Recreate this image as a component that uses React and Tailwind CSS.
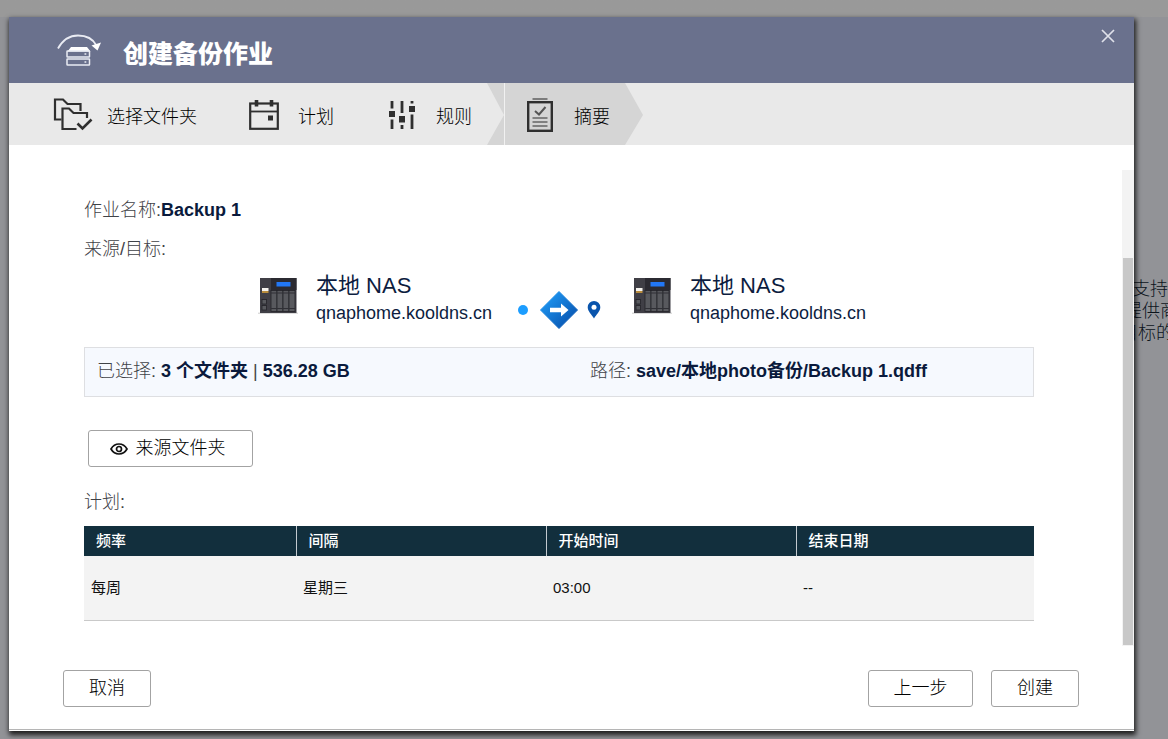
import React from "react";

function BackupLogo() {
  return (
    <svg viewBox="0 0 46 34" className="h-[34px] w-[46px]" fill="none" aria-hidden="true">
      <path d="M2 15.500C7 6.500 14 2.500 22 2.500c8 0 15 3.500 18.500 10" stroke="#e9ebf3" strokeWidth="1.800" />
      <path d="M35.500 12.500l9.500-3-3.500 8z" fill="#fff" />
      <path d="M15 14h16l3.500 4.500h-23z" fill="#fff" />
      <rect x="11" y="18" width="22.500" height="6" rx="0.500" stroke="#e9ebf3" strokeWidth="1.500" />
      <rect x="11" y="26" width="22.500" height="6" rx="0.500" stroke="#e9ebf3" strokeWidth="1.500" />
      <path d="M28.500 21h1.800M28.500 29h1.800" stroke="#e9ebf3" strokeWidth="1.400" />
    </svg>
  );
}

function FoldersIcon() {
  return (
    <svg viewBox="0 0 40 34" className="h-[34px] w-10" fill="none" stroke="#2f2f2f" strokeWidth="2.200" aria-hidden="true">
      <path d="M8.500 21.500H2V1.500h8l4.500 4.500h13v7" />
      <path d="M23.500 31H9.500V10.500H16l4.500 4.500h13.500v5" />
      <path d="M24.500 25.500l5 5L38.500 21.500" strokeWidth="2.600" />
    </svg>
  );
}

function CalendarIcon() {
  return (
    <svg viewBox="0 0 30 30" className="h-[30px] w-[30px]" fill="none" stroke="#2f2f2f" aria-hidden="true">
      <rect x="1.200" y="3.500" width="27.600" height="25.300" strokeWidth="2.200" />
      <path d="M1 11.500h28" strokeWidth="1.800" />
      <path d="M7.500 0v6.500M22.500 0v6.500" strokeWidth="3.600" />
      <rect x="19" y="15.500" width="5" height="5" fill="#2f2f2f" stroke="none" />
    </svg>
  );
}

function SlidersIcon() {
  return (
    <svg viewBox="0 0 26 30" className="h-[30px] w-[26px]" aria-hidden="true">
      <path d="M3 1v7.500M3 19.500V29M13 1v12M13 25v4M23 1v2.500M23 14.500V29" stroke="#2f2f2f" strokeWidth="2.800" fill="none" />
      <g fill="#2f2f2f">
        <rect x="0" y="11" width="6" height="6" />
        <rect x="10" y="16" width="6" height="6.500" />
        <rect x="20" y="6" width="6" height="6" />
      </g>
    </svg>
  );
}

function SummaryIcon() {
  return (
    <svg viewBox="0 0 26 34" className="h-[34px] w-[26px]" fill="none" aria-hidden="true">
      <path d="M5.500 1h15" stroke="#666" strokeWidth="1.600" />
      <rect x="1.200" y="4.200" width="23.600" height="28.600" stroke="#2f2f2f" strokeWidth="2.400" />
      <path d="M8 13l4 3.500L18.500 9" stroke="#555" strokeWidth="2" />
      <path d="M5.500 20h15M5.500 24h15M5.500 28h15" stroke="#666" strokeWidth="1.500" />
    </svg>
  );
}

function NasImage() {
  return (
    <svg viewBox="0 0 40 36" className="h-9 w-10 shrink-0" aria-hidden="true">
      <path d="M0 35.200h40" stroke="#ccc" strokeWidth="1" />
      <rect x="2" y="0" width="36.500" height="35" fill="#403f46" />
      <rect x="13" y="0" width="25.500" height="12" fill="#2b2a31" />
      <rect x="18.500" y="4" width="14" height="4.500" fill="#2277f6" />
      <rect x="4" y="10" width="6.500" height="3" fill="#f5f3ee" />
      <rect x="4" y="13" width="6.500" height="2" fill="#b98c3c" />
      <g fill="#58595e" stroke="#232329" strokeWidth="0.800">
        <rect x="13" y="12.500" width="6" height="21" />
        <rect x="19" y="12.500" width="6" height="21" />
        <rect x="25" y="12.500" width="6" height="21" />
        <rect x="31" y="12.500" width="6" height="21" />
        <rect x="4" y="21.500" width="4.500" height="4.500" />
        <rect x="4" y="27.500" width="4.500" height="4.500" />
      </g>
      <path d="M13 15h24M13 30.500h24" stroke="#303036" strokeWidth="1" />
    </svg>
  );
}

function TransferGraphic() {
  return (
    <svg viewBox="0 0 84 38" className="h-[38px] w-[84px] shrink-0" role="img" aria-label="→">
      <defs>
        <linearGradient id="diamond" x1="0" y1="0" x2="1" y2="1">
          <stop offset="0.200" stopColor="#1c91ec" />
          <stop offset="0.800" stopColor="#0a5ab6" />
        </linearGradient>
      </defs>
      <circle cx="6" cy="19" r="5" fill="#1c9dff" />
      <path d="M42 0.500L60.500 19L42 37.500L23.500 19z" fill="url(#diamond)" stroke="url(#diamond)" strokeWidth="1" strokeLinejoin="round" />
      <path d="M33 16.800h11V12.500L51.500 19L44 25.500V21.200H33z" fill="#fff" />
      <path d="M77 10a6.300 6.300 0 0 1 6.300 6.300c0 4-4 7.500-6.300 11.200c-2.300-3.700-6.300-7.200-6.300-11.200A6.300 6.300 0 0 1 77 10z" fill="#0a55ad" />
      <circle cx="77" cy="16.200" r="2.500" fill="#fff" />
    </svg>
  );
}

function EyeIcon() {
  return (
    <svg viewBox="0 0 18 12" className="mt-[2px] h-3 w-[18px]" fill="none" stroke="#111" strokeWidth="1.700" aria-hidden="true">
      <path d="M1 6C3 2.500 5.800 1 9 1s6 1.500 8 5c-2 3.500-4.800 5-8 5S3 9.500 1 6z" />
      <circle cx="9" cy="6" r="2.500" />
    </svg>
  );
}

function Endpoint() {
  return (
    <div className="flex items-start gap-[18px]">
      <div className="pt-[5px]"><NasImage /></div>
      <div className="w-[172px] whitespace-nowrap text-[#0d1d3f]">
        <div className="text-[22px] leading-[26px] font-normal">本地 NAS</div>
        <div className="text-lg leading-7">qnaphome.kooldns.cn</div>
      </div>
    </div>
  );
}

function Button({ className, children }) {
  return (
    <button
      type="button"
      className={"flex h-[37px] items-center justify-center rounded-[3px] border border-[#a3a3a3] bg-white pb-[2px] text-lg text-black " + className}
    >
      {children}
    </button>
  );
}

function Value({ children }) {
  return <strong className="font-bold text-[#0a1a3c]">{children}</strong>;
}

const steps = [
  { label: "选择文件夹", icon: <FoldersIcon />, box: "pl-11 gap-[14px]" },
  { label: "计划", icon: <CalendarIcon />, box: "pl-[52px] gap-[19px]" },
  { label: "规则", icon: <SlidersIcon />, box: "pl-[55px] pr-[15px] gap-[21px]" },
];

const columns = [
  { title: "频率", value: "每周", width: "w-[212px]" },
  { title: "间隔", value: "星期三", width: "w-[250px]" },
  { title: "开始时间", value: "03:00", width: "w-[250px]" },
  { title: "结束日期", value: "--", width: "" },
];

export default function App() {
  return (
    <div className="relative flex min-h-screen flex-col overflow-hidden bg-[#929397] bg-linear-to-b from-[#999999] from-[17px] to-[#929397] to-[17px] pt-[17px] pr-[34px] pb-2 pl-[9px] font-['Liberation_Sans','Noto_Sans_CJK_SC',sans-serif] font-light">
      <p className="absolute top-[278px] -right-[6px] w-[54px] text-lg leading-[22px] whitespace-nowrap text-[#0c141c]">
        <span className="block pl-3">支持多</span>
        <span className="block pl-1">提供商</span>
        <span className="block">目标的</span>
      </p>

      <main className="relative flex flex-1 flex-col border-b border-white bg-white shadow-[1px_3px_5px_1px_rgba(0,0,0,0.8)]">
        <header className="flex h-[66px] justify-between bg-[#6a718d] pl-[47px]">
          <div className="flex items-center gap-[21px]">
            <BackupLogo />
            <h1 className="pt-2 text-[25px] leading-[34px] font-black text-white">创建备份作业</h1>
          </div>
          <button type="button" aria-label="×" className="flex h-[38px] w-[53px] items-center justify-center">
            <svg viewBox="0 0 14 14" className="h-[14px] w-[14px]" stroke="#dfe1ea" strokeWidth="1.700" aria-hidden="true">
              <path d="M1 1l12 12M13 1L1 13" />
            </svg>
          </button>
        </header>

        <nav className="flex h-[62px] bg-[#e9e9e9] text-lg text-black">
          {steps.map((s) => (
            <div key={s.label} className={"flex items-center pt-px " + s.box}>
              {s.icon}
              <span className="pt-1">{s.label}</span>
            </div>
          ))}
          <svg viewBox="0 0 18 62" className="h-[62px] w-[18px]" aria-hidden="true">
            <path d="M0 0h17v62H0L17 32z" fill="#d5d5d5" />
            <path d="M17.500 0v62" stroke="#f1f1f1" />
          </svg>
          <div className="flex items-center gap-[21px] bg-[#d5d5d5] pt-px pr-[15px] pl-[22px]">
            <SummaryIcon />
            <span className="pt-1">摘要</span>
          </div>
          <svg viewBox="0 0 18 62" className="h-[62px] w-[18px]" aria-hidden="true">
            <path d="M0 0L18 32L0 62z" fill="#d5d5d5" />
          </svg>
        </nav>

        <div className="flex flex-1 pt-[25px]">
          <section className="flex-1 pt-[26px] pr-[88px] pl-[75px] text-lg leading-7 text-[#3f4247]">
            <p className="flex"><span>作业名称:</span><Value>Backup 1</Value></p>
            <p className="mt-[11px]">来源/目标:</p>
            <div className="mt-[10px] flex pl-[174px]">
              <Endpoint />
              <div className="pt-[18px] pr-[31px] pl-[29px]"><TransferGraphic /></div>
              <Endpoint />
            </div>
            <div className="mt-[18px] grid h-[50px] grid-cols-[493px_1fr] items-center border border-[#dedfe2] bg-[#f6f9fe] px-3 pb-[2px]">
              <p>已选择: <Value>3 个文件夹</Value> | <Value>536.28 GB</Value></p>
              <p>路径: <Value>save/本地photo备份/Backup 1.qdff</Value></p>
            </div>
            <div className="mt-[33px] ml-1 flex">
              <Button className="w-[165px] gap-2 pr-[6px]"><EyeIcon />来源文件夹</Button>
            </div>
            <p className="mt-[21px]">计划:</p>
            <table className="mt-[10px] w-full table-fixed border-b border-[#c9c9c9] text-left text-[15px] leading-5">
              <thead>
                <tr className="h-[30px] bg-[#122f3d] text-white">
                  {columns.map((c) => (
                    <th key={c.title} className={"border-r border-[#c3cad0] pl-3 font-medium last:border-r-0 " + c.width}>{c.title}</th>
                  ))}
                </tr>
              </thead>
              <tbody>
                <tr className="h-16 bg-[#f3f3f3] font-normal text-[#111]">
                  {columns.map((c) => (
                    <td key={c.title} className="pl-[7px]">{c.value}</td>
                  ))}
                </tr>
              </tbody>
            </table>
          </section>
          <div className="flex w-3 flex-col bg-[#f3f3f3] px-px pt-[88px] pb-px">
            <div className="flex-1 bg-[#c8c8c8]" />
          </div>
        </div>

        <footer className="flex gap-[18px] border-b border-[#b5b5b5] pt-6 pr-[55px] pb-[22px] pl-[54px]">
          <Button className="mr-auto w-[88px]">取消</Button>
          <Button className="w-[105px]">上一步</Button>
          <Button className="w-[88px]">创建</Button>
        </footer>
      </main>
    </div>
  );
}
